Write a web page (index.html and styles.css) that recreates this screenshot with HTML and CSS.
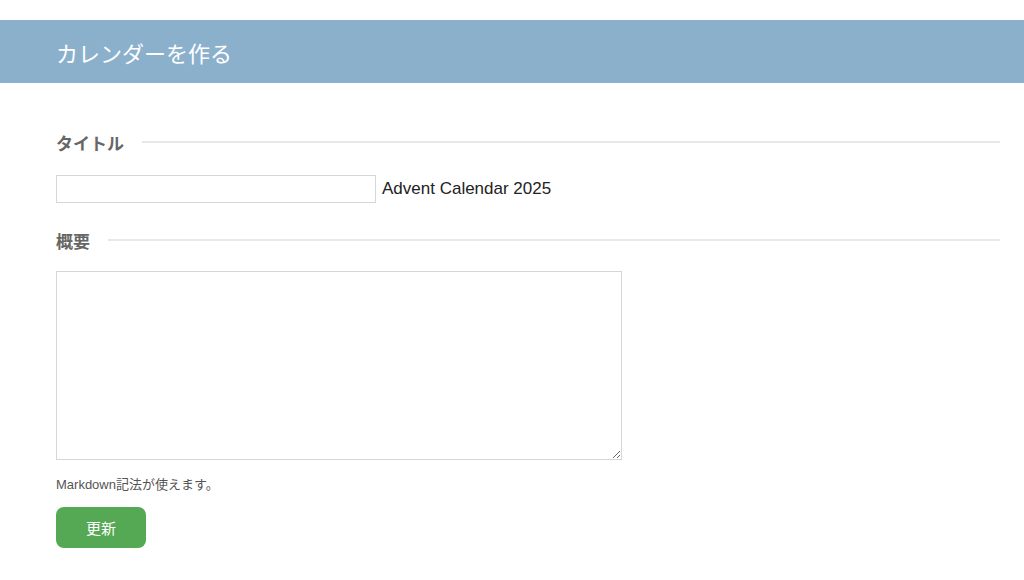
FILE: index.html
```html
<!DOCTYPE html>
<html lang="ja">
<head>
<meta charset="utf-8">
<title>カレンダーを作る</title>
<link rel="stylesheet" href="styles.css">
</head>
<body>
<header class="page-header">
  <h1 class="page-title">カレンダーを作る</h1>
</header>
<main class="content">
  <form class="form">
    <h2 class="section-heading"><span>タイトル</span></h2>
    <div class="title-row">
      <input class="text-input" type="text">
      <span class="title-suffix">Advent Calendar 2025</span>
    </div>
    <h2 class="section-heading"><span>概要</span></h2>
    <textarea class="textarea"></textarea>
    <p class="hint">Markdown記法が使えます。</p>
    <button class="btn" type="button">更新</button>
  </form>
</main>
</body>
</html>
```
FILE: styles.css
```css
html, body {
  margin: 0;
  padding: 0;
  background: #fff;
  font-family: "Liberation Sans", "Noto Sans CJK JP", sans-serif;
  color: #222;
}
body {
  padding-top: 20px;
}
.page-header {
  background: #8bb0cc;
  height: 63px;
  display: flex;
  align-items: center;
  padding: 0 56px;
}
.page-title {
  margin: 0;
  font-size: 22px;
  font-weight: normal;
  color: #fff;
  font-family: "Noto Sans CJK JP", sans-serif;
}
.content {
  padding: 48px 24px 0 56px;
}
.form {
  display: flex;
  flex-direction: column;
  align-items: flex-start;
}
.section-heading {
  width: 100%;
  display: flex;
  align-items: center;
  gap: 18px;
  margin: 0;
  font-size: 17px;
  font-weight: bold;
  color: #666;
  font-family: "Noto Sans CJK JP", sans-serif;
  height: 22px;
}
.section-heading::after {
  content: "";
  flex: 1;
  height: 2px;
  background: #e8e8e8;
}
.title-row {
  display: flex;
  align-items: center;
  gap: 6px;
  margin: 22px 0 26px;
}
.text-input {
  box-sizing: border-box;
  width: 320px;
  height: 28px;
  border: 1px solid #d6d6d6;
  margin: 0;
  padding: 2px 6px;
}
.title-suffix {
  font-size: 17px;
  color: #222;
  font-family: "Liberation Sans", sans-serif;
}
.textarea {
  box-sizing: border-box;
  margin: 20px 0 0;
  width: 566px;
  height: 189px;
  border: 1px solid #d6d6d6;
  padding: 4px;
  resize: both;
}
.hint {
  margin: 16px 0 0;
  font-size: 13px;
  color: #555;
  font-family: "Liberation Sans", "Noto Sans CJK JP", sans-serif;
  line-height: 18px;
}
.btn {
  margin-top: 13px;
  width: 90px;
  height: 41px;
  border: none;
  border-radius: 8px;
  background: #55a954;
  color: #fff;
  font-size: 15px;
  font-family: "Noto Sans CJK JP", sans-serif;
}
```
